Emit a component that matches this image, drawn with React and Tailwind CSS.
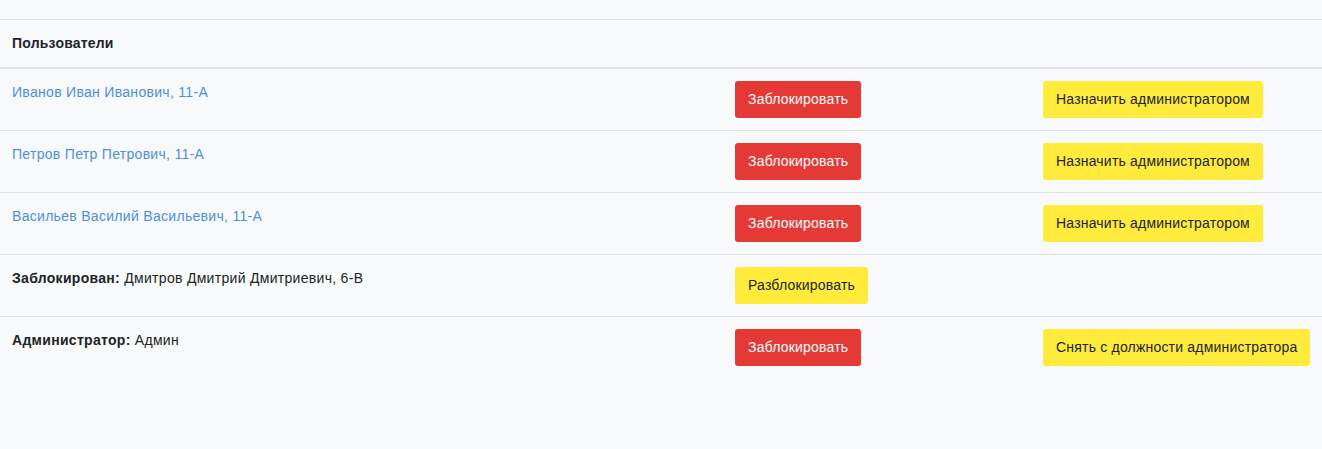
import React from "react";

const users = [
  { name: "Иванов Иван Иванович, 11-А" },
  { name: "Петров Петр Петрович, 11-А" },
  { name: "Васильев Василий Васильевич, 11-А" },
];

const redBtn =
  "whitespace-nowrap rounded-[3px] bg-[#e53935] px-[13px] h-[37px] text-[14px] tracking-[0.2px] text-white";
const yellowBtn =
  "whitespace-nowrap rounded-[3px] bg-[#ffeb3b] px-[13px] h-[37px] text-[14px] tracking-[0.2px] text-[#212529]";

function Row({ children, action, admin, last }) {
  return (
    <div
      className={
        "grid grid-cols-[723px_308px_1fr] " + (last ? "" : "border-b border-[#dee2e6]")
      }
    >
      <div className="px-3 pt-[13px] pb-3 text-[14px] leading-[21px] tracking-[0.3px]">
        {children}
      </div>
      <div className="px-3 py-3">{action}</div>
      <div className="px-3 py-3">{admin}</div>
    </div>
  );
}

export default function App() {
  return (
    <div
      className="min-h-[449px] bg-[#f8f9fa] pt-[19px] text-[#212529]"
      style={{ fontFamily: "'Liberation Sans', Arial, sans-serif" }}
    >
      <div className="border-t border-[#dee2e6]">
        <div className="flex h-[49px] items-center border-b-2 border-[#dee2e6] px-3 text-[14px] font-bold tracking-[0.2px]">
          Пользователи
        </div>
        {users.map((u) => (
          <Row
            key={u.name}
            action={<button className={redBtn}>Заблокировать</button>}
            admin={<button className={yellowBtn}>Назначить администратором</button>}
          >
            <a href="#" className="text-[#4a90e2]">
              {u.name}
            </a>
          </Row>
        ))}
        <Row action={<button className={yellowBtn}>Разблокировать</button>} admin={null}>
          <b>Заблокирован:</b> Дмитров Дмитрий Дмитриевич, 6-В
        </Row>
        <Row
          last
          action={<button className={redBtn}>Заблокировать</button>}
          admin={<button className={yellowBtn}>Снять с должности администратора</button>}
        >
          <b>Администратор:</b> Админ
        </Row>
      </div>
    </div>
  );
}
